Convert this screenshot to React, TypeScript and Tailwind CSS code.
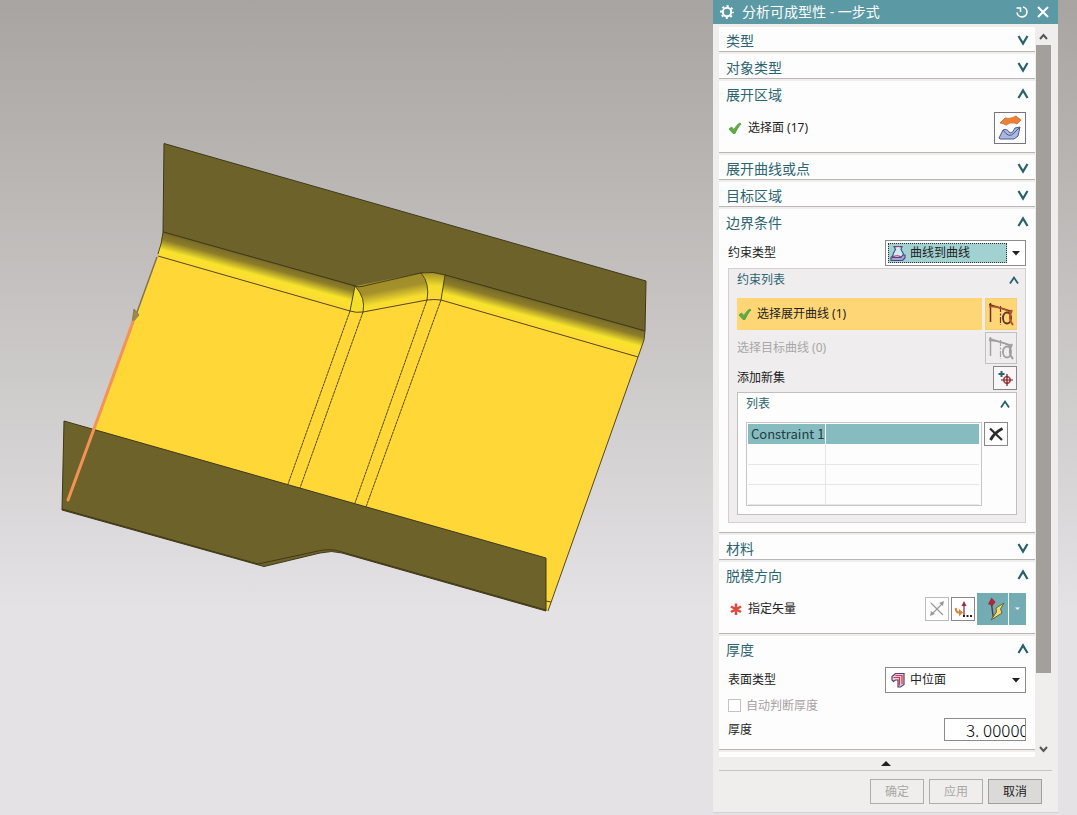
import { ReactNode, useState } from 'react'

const Chevron = ({ open }: { open: boolean }) => (
    <svg viewBox="0 0 12 16" className="w-3 h-4 shrink-0" fill="none">
        <path
            d={open ? 'M1.5 13 6 5.5 10.5 13' : 'M1.5 5 6 12.5 10.5 5'}
            stroke="#27616b"
            strokeWidth="2.2"
        />
    </svg>
)

const SmallChevron = () => (
    <svg viewBox="0 0 10 12" className="w-[10px] h-3 shrink-0" fill="none">
        <path d="M1 9.5 5 3.5 9 9.5" stroke="#27616b" strokeWidth="1.8" />
    </svg>
)

const Check = () => (
    <svg viewBox="0 0 14 14" className="w-[14px] h-[14px] shrink-0">
        <path
            d="M1 8 3.5 6 6 8.500C8 5 10 3 12 2L13 3C10.500 5.500 8.500 9 7 12.500H5Z"
            fill="#5cad45"
            stroke="#4f9a3c"
            strokeWidth="0.8"
        />
    </svg>
)

const CurveIcon = ({ disabled }: { disabled?: boolean }) => {
    const dark = disabled ? '#a5a2a2' : '#63352a'
    const red = disabled ? '#a09c9f' : '#b9502a'
    return (
        <svg viewBox="0 0 30 30" className="w-[30px] h-[30px]" fill="none">
            <path d="M4.500 4V23" stroke={dark} strokeWidth="1.500" />
            <path d="M14.500 7V26" stroke={dark} strokeWidth="1.200" strokeDasharray="6 1.500 2 1.500" />
            <path d="M3 5.500 26 12.500" stroke={dark} strokeWidth="1.400" />
            <path d="M3 7.500C11 7 19 10 26 14" stroke={red} strokeWidth="1.500" />
            <ellipse cx="21" cy="19" rx="4" ry="5.500" stroke={dark} strokeWidth="1.900" />
            <path d="M26 11C23 16 23 22 27 26" stroke={red} strokeWidth="2" />
        </svg>
    )
}

interface SectionProps {
    title: string
    open?: boolean
    children?: ReactNode
}

const Section = ({ title, open = false, children }: SectionProps) => (
    <section className="bg-[#fefdfd] border-b border-[#b9b6b5]">
        <h2>
            <button className="w-full flex items-start justify-between pt-1 pl-[7px] pr-[6px] text-sm leading-5 text-[#2c6470]">
                {title}
                <Chevron open={open} />
            </button>
        </h2>
        {open && <div className="pt-[7px] px-[9px]">{children}</div>}
    </section>
)

interface PickerProps {
    id: string
    icon: ReactNode
    value: string
    active?: boolean
}

const Picker = ({ id, icon, value, active }: PickerProps) => (
    <div className="relative w-[141px] h-[26px] border border-[#8d8a8a] bg-white p-[2px]">
        <div
            className={
                active
                    ? 'flex items-center w-[119px] h-5 pl-px border border-dotted border-[#333] bg-[#a2d1d1]'
                    : 'flex items-center w-[119px] h-5 pl-[2px]'
            }
        >
            {icon}
        </div>
        <select
            id={id}
            className="absolute inset-0 w-full h-full pl-6 appearance-none bg-transparent text-xs text-[#222] outline-none"
        >
            <option>{value}</option>
        </select>
        <svg viewBox="0 0 8 5" className="absolute right-[5px] top-[10px] w-2 h-[5px] pointer-events-none">
            <path d="M0 0H8L4 4.500Z" fill="#222" />
        </svg>
    </div>
)

// 钣金零件
const Model = () => (
    <svg viewBox="0 0 713 812" className="block w-full" fill="none" strokeLinejoin="round">
        <defs>
            <linearGradient id="bendLeft" gradientUnits="userSpaceOnUse" x1="260" y1="258" x2="253" y2="284">
                <stop offset="0.02" stopColor="#776a28" />
                <stop offset="0.28" stopColor="#8d7d29" />
                <stop offset="0.65" stopColor="#f8e42b" />
                <stop offset="1" stopColor="#ffd838" />
            </linearGradient>
            <linearGradient id="bendMid" gradientUnits="userSpaceOnUse" x1="390" y1="280" x2="395" y2="306">
                <stop offset="0" stopColor="#a08d29" />
                <stop offset="0.35" stopColor="#a5912b" />
                <stop offset="0.8" stopColor="#f7de2d" />
                <stop offset="1" stopColor="#ffd838" />
            </linearGradient>
            <linearGradient id="bendCorner" gradientUnits="userSpaceOnUse" x1="434" y1="272" x2="432" y2="300">
                <stop offset="0" stopColor="#a08d29" />
                <stop offset="0.5" stopColor="#f2dd2c" />
                <stop offset="1" stopColor="#ffd838" />
            </linearGradient>
            <linearGradient id="bendRight" gradientUnits="userSpaceOnUse" x1="550" y1="304" x2="543" y2="330">
                <stop offset="0.02" stopColor="#776a28" />
                <stop offset="0.28" stopColor="#8d7d29" />
                <stop offset="0.65" stopColor="#f8e42b" />
                <stop offset="1" stopColor="#ffd838" />
            </linearGradient>
        </defs>

        <path
            d="M163 231 158 256 94 430 546 558V610L548 611 638 357 644 340V331L445 275 427 272 355 286Z"
            fill="#ffd838"
        />
        <path
            d="M164 143.500 646 281 645 331 445 275Q433 271 421 273L368 285Q359 288 355 286L163 232Z"
            fill="#6d632a"
            stroke="#3f3818"
        />
        <path d="M163 232 355 286 350 311 158 256 160 246Z" fill="url(#bendLeft)" />
        <path d="M355 286 421 273Q430 283 427 300L363 312 350 311Z" fill="url(#bendMid)" />
        <path d="M355 286Q366 298 363 312L350 311Z" fill="#f5df2d" />
        <path d="M421 273Q433 271 445 275L441 300H427Q430 283 421 273Z" fill="url(#bendCorner)" />
        <path d="M445 275 645 331 644 340 638 357 441 300Z" fill="url(#bendRight)" />

        <g stroke="#3f3818" strokeWidth="0.9">
            <path d="M163 232 355 286 Q358 288 368 285L421 273Q433 271 445 275L645 331" />
            <path d="M158 256 350 311Q356 313 363 312L427 300Q434 299 441 300L638 357" />
            <path d="M355 286Q366 298 363 312M355 286 350 311M421 273Q430 283 427 300M445 275 441 300" />
            <path d="M163 232Q162 243 158 254M645 331 644 340 638 357 548 611" />
            <path
                d="M350 311 288 484M363 312 300 488M427 300 355 503M441 300 366 507"
                strokeDasharray="3 0.500"
            />
            <path d="M546 601 551 602" />
        </g>

        <path
            d="M64 421 546 558 546 611 342 553Q332 550 320 553L264 566.500 62 510Z"
            fill="#6d632a"
            stroke="#3f3818"
        />
        <path d="M62 509 258 564 318 551Q332 548 342 552L546 610" stroke="#3f3818" />
        <path d="M157 257 136 315" stroke="#85744a" strokeWidth="1.500" />
        <path d="M134 309 132 323 139 315Z" fill="#9b8a50" stroke="#8a7c4c" />
        <path d="M133 322 68 500" stroke="#f49355" strokeWidth="3" strokeLinecap="round" />
    </svg>
)

const App = () => {
    const [thickness, setThickness] = useState('3. 00000')

    return (
        <div className="min-h-screen flex items-start bg-linear-to-b from-[#a7a4a1] via-[#c8c5c4] via-40% to-[#e4e2e5] to-75% font-['Noto_Sans','Noto_Sans_CJK_SC',sans-serif] text-xs text-[#222]">
            <main className="flex-1 min-w-0">
                <Model />
            </main>

            <aside className="w-[345px] shrink-0 mr-[19px] bg-[#f0eeed] border-b border-[#d5d3d3]">
                <header className="h-6 flex items-center pl-[7px] pr-2 bg-[#5b99a5] text-white">
                    <svg viewBox="0 0 14 14" className="w-[14px] h-[14px]" fill="none" stroke="#fff">
                        <circle cx="7" cy="7" r="4.200" strokeWidth="2" />
                        <circle cx="7" cy="7" r="6" strokeWidth="1.800" strokeDasharray="2.200 2.512" strokeDashoffset="1.100" />
                    </svg>
                    <h1 className="flex-1 pl-2 text-sm leading-6">分析可成型性 - 一步式</h1>
                    <button aria-label="重置" className="mr-[7px]">
                        <svg viewBox="0 0 14 14" className="w-[14px] h-[14px]" fill="none" stroke="#fff" strokeWidth="1.600">
                            <path d="M8 2A5 5 0 1 1 2 7.500" />
                            <path d="M1.500 3H5.500V7" />
                        </svg>
                    </button>
                    <button aria-label="关闭">
                        <svg viewBox="0 0 14 14" className="w-[14px] h-[14px]" stroke="#fff" strokeWidth="2">
                            <path d="M2 2 12 12M12 2 2 12" />
                        </svg>
                    </button>
                </header>

                <div className="flex pt-[3px] pl-[6px] pr-[7px]">
                    <div className="flex-1 flex flex-col gap-[2px]">
                        <Section title="类型" />
                        <Section title="对象类型" />
                        <Section title="展开区域" open>
                            <div className="flex items-center pb-2">
                                <Check />
                                <span className="flex-1 pl-[6px]">选择面 (17)</span>
                                <button aria-label="选择面" className="w-8 h-8 border border-[#77757f] bg-white">
                                    <svg viewBox="0 0 30 30" className="w-[30px] h-[30px]">
                                        <path
                                            d="M5 10 10 5Q14 6 18 4.500L21 3 26 7 22 11 20 10Q15 9 11 12L9 11Z"
                                            fill="#ee8035"
                                            stroke="#c96a28"
                                            strokeWidth="0.8"
                                        />
                                        <path
                                            d="M4 25 8 17Q12 15 15 20 18 20 20 15L25 14 23 23 19 26H5Z"
                                            fill="#a9b9e4"
                                            stroke="#4c5a86"
                                        />
                                        <path d="M8 17Q14 26 19 20L25 14" fill="none" stroke="#4c5a86" />
                                    </svg>
                                </button>
                            </div>
                        </Section>
                        <Section title="展开曲线或点" />
                        <Section title="目标区域" />

                        <Section title="边界条件" open>
                            <div className="flex items-center justify-between">
                                <label htmlFor="constraintType">约束类型</label>
                                <Picker
                                    id="constraintType"
                                    active
                                    value="曲线到曲线"
                                    icon={
                                        <svg viewBox="0 0 16 16" className="w-4 h-4" strokeWidth="1.100">
                                            <path d="M1 12.500 4 10H15V13L12.500 15.500H1Z" fill="#a9a0d8" stroke="#4b4583" />
                                            <path d="M4 1.500H12L11 4.500 13.500 9 11 12.500H2.500L3.500 8 5.500 4.500Z" fill="#d3e8ef" stroke="#33528a" />
                                            <path d="M4 2.500Q8 0.500 12 2.500" fill="none" stroke="#a5405c" />
                                            <path d="M3 12Q7 9.500 11 12" fill="none" stroke="#be3552" />
                                        </svg>
                                    }
                                />
                            </div>

                            <div className="mt-[2px] mb-[9px] border border-[#d3d0d0] bg-[#efeded] px-2 pb-[7px]">
                                <h3 className="-mr-[2px]">
                                    <button className="w-full h-[29px] flex items-start justify-between pt-[3px] leading-4 text-[#2c6470]">
                                        约束列表
                                        <span className="pt-[2px]">
                                            <SmallChevron />
                                        </span>
                                    </button>
                                </h3>
                                <div className="flex flex-col gap-[2px]">
                                    <div className="flex gap-[3px]">
                                        <div className="flex-1 h-8 flex items-center pl-px bg-[#ffd676]">
                                            <Check />
                                            <span className="pl-[5px]">选择展开曲线 (1)</span>
                                        </div>
                                        <button aria-label="选择展开曲线" className="w-8 h-8 border border-[#f6cf75] bg-[#ffd676]">
                                            <CurveIcon />
                                        </button>
                                    </div>
                                    <div className="flex items-center justify-between text-[#a9a7a7]">
                                        <span>选择目标曲线 (0)</span>
                                        <button aria-label="选择目标曲线" disabled className="w-8 h-8 border border-[#c2c0c0]">
                                            <CurveIcon disabled />
                                        </button>
                                    </div>
                                    <div className="flex items-center justify-between">
                                        <span>添加新集</span>
                                        <button aria-label="添加新集" className="w-6 h-6 border border-[#88868a] bg-[#f8f6f6]">
                                            <svg viewBox="0 0 22 22" className="w-[22px] h-[22px]" fill="none">
                                                <path d="M7.500 4V10M4.500 7H10.500" stroke="#2c6472" strokeWidth="2" />
                                                <circle cx="13" cy="13" r="3.200" stroke="#cf4040" strokeWidth="1.500" />
                                                <path d="M13 7V19M7 13H19" stroke="#4d2224" strokeWidth="1.200" />
                                            </svg>
                                        </button>
                                    </div>

                                    <div className="border border-[#c2bfbf] bg-[#fdfdfd] px-2 pb-2">
                                        <h4 className="-mr-[2px]">
                                            <button className="w-full h-[29px] flex items-start justify-between pt-[3px] leading-4 text-[#2c6470]">
                                                列表
                                                <span className="pt-[2px]">
                                                    <SmallChevron />
                                                </span>
                                            </button>
                                        </h4>
                                        <div className="flex items-start gap-[2px]">
                                            <div className="flex-1 h-[84px] border border-[#c8c6c6] p-px pr-[2px]">
                                                <table className="w-full table-fixed border-collapse">
                                                    <tbody>
                                                        <tr className="h-5 bg-[#86bcbf] font-['Noto_Sans_CJK_SC',sans-serif] text-[13px] leading-4 text-[#1f3d42]">
                                                            <td className="w-[77px] pl-[3px] py-0 border-r border-white whitespace-nowrap">
                                                                Constraint 1
                                                            </td>
                                                            <td />
                                                        </tr>
                                                        {[0, 1, 2].map((row) => (
                                                            <tr key={row} className="h-5 border-b border-[#e8e5e5]">
                                                                <td className="border-r border-[#e8e5e5]" />
                                                                <td />
                                                            </tr>
                                                        ))}
                                                    </tbody>
                                                </table>
                                            </div>
                                            <button aria-label="删除" className="w-6 h-6 border border-[#88868a] bg-white">
                                                <svg viewBox="0 0 22 22" className="w-[22px] h-[22px]" stroke="#2a2a2a" fill="none">
                                                    <path d="M5 5.500 17 17" strokeWidth="2.200" />
                                                    <path d="M17.500 5.500Q9 10 5.500 17" strokeWidth="2.800" />
                                                </svg>
                                            </button>
                                        </div>
                                    </div>
                                </div>
                            </div>
                        </Section>

                        <Section title="材料" />
                        <Section title="脱模方向" open>
                            <div className="flex items-center gap-[2px] pb-2">
                                <svg viewBox="0 0 14 14" className="w-[14px] h-[14px]" stroke="#e0493b" strokeWidth="2.500">
                                    <path d="M8 1.500V13M3 4.500 13 10M13 4.500 3 10" />
                                </svg>
                                <span className="flex-1 pl-1">指定矢量</span>
                                <button aria-label="反向" disabled className="w-6 h-6 border border-[#bdbbbb]">
                                    <svg viewBox="0 0 22 22" className="w-[22px] h-[22px]" stroke="#999" fill="#999">
                                        <path d="M5 5 17 17M6 16 16 6" strokeWidth="1.200" />
                                        <path d="M18 3 17 8 13 5ZM4 18 5 13 9 16Z" stroke="none" />
                                    </svg>
                                </button>
                                <button aria-label="矢量对话框" className="w-6 h-6 border border-[#88868a] bg-white">
                                    <svg viewBox="0 0 22 22" className="w-[22px] h-[22px]" fill="none">
                                        <path d="M12 17V6" stroke="#8c3340" strokeWidth="1.300" />
                                        <path d="M12 3 14.500 8H9.500Z" fill="#9a2e44" />
                                        <path d="M4 10Q3 15 9 14.500" stroke="#e18439" strokeWidth="2.200" />
                                        <path d="M7 11 11 14.500 7 18.500Z" fill="#e18439" />
                                        <path d="M11 18H13M14.500 18H16.500M18 18H20" stroke="#222" strokeWidth="2" />
                                    </svg>
                                </button>
                                <div className="flex gap-px">
                                    <button aria-label="自动判断矢量" className="w-[31px] h-8 bg-[#73adb3]">
                                        <svg viewBox="0 0 31 32" className="w-[31px] h-8" fill="none">
                                            <path d="M14.500 11 16.500 26" stroke="#5d3a3d" strokeWidth="1.500" />
                                            <path d="M14.500 4.500 18.500 9 15.500 13 11 11Z" fill="#a8283c" />
                                            <path
                                                d="M27 10 19 15 19.500 19 14 27 25 20 23.500 16Z"
                                                fill="#f3dd6e"
                                                stroke="#5e5a2c"
                                                strokeWidth="0.9"
                                            />
                                        </svg>
                                    </button>
                                    <button aria-label="更多矢量类型" className="w-[17px] h-8 bg-[#73adb3]">
                                        <svg viewBox="0 0 17 32" className="w-[17px] h-8">
                                            <path d="M6 14.500H11L8.500 17Z" fill="#fff" />
                                        </svg>
                                    </button>
                                </div>
                            </div>
                        </Section>

                        <Section title="厚度" open>
                            <div className="flex items-center justify-between">
                                <label htmlFor="surfaceType">表面类型</label>
                                <Picker
                                    id="surfaceType"
                                    value="中位面"
                                    icon={
                                        <svg viewBox="0 0 16 16" className="w-4 h-4" strokeWidth="1.200">
                                            <path
                                                d="M2 4.500 5.500 1.500H14V12.500L10.500 15H8V8H5.500L3.500 9.500 2 8Z"
                                                fill="#ecd0da"
                                                stroke="#514078"
                                            />
                                            <path d="M3.500 5.500H9.500V13.500M5.500 3.500H12V12" fill="none" stroke="#cf3b4b" />
                                        </svg>
                                    }
                                />
                            </div>
                            <label className="flex items-center gap-[5px] h-[25px] text-[#a5a3a3]">
                                <input
                                    type="checkbox"
                                    disabled
                                    className="w-[13px] h-[13px] appearance-none border border-[#c5c3c3] bg-white"
                                />
                                自动判断厚度
                            </label>
                            <div className="flex items-center justify-between pb-2">
                                <label htmlFor="thickness">厚度</label>
                                <input
                                    id="thickness"
                                    value={thickness}
                                    onChange={(e) => setThickness(e.target.value)}
                                    className="w-[82px] h-[23px] pl-[21px] border border-[#8d8a8a] bg-white font-['Noto_Sans_CJK_SC',sans-serif] font-light text-[17px] leading-5 text-black outline-none"
                                />
                            </div>
                        </Section>
                        <div className="h-[5px] bg-[#fefdfd]" />
                    </div>

                    {/* 滚动条 */}
                    <div className="w-[16px] pl-px flex flex-col items-center">
                        <svg viewBox="0 0 15 18" className="w-[15px] h-[18px]" fill="none" stroke="#555" strokeWidth="2">
                            <path d="M4 12 7.500 8 11 12" />
                        </svg>
                        <div className="w-full flex-1">
                            <div className="h-[90%] bg-[#a39f9b]" />
                        </div>
                        <svg viewBox="0 0 15 14" className="w-[15px] h-[14px]" fill="none" stroke="#555" strokeWidth="2">
                            <path d="M4 4 7.500 8 11 4" />
                        </svg>
                    </div>
                </div>

                <button aria-label="收起" className="w-full h-[13px] flex justify-center items-center">
                    <svg viewBox="0 0 10 5" className="w-[10px] h-[5px]">
                        <path d="M5 0 10 5H0Z" fill="#222" />
                    </svg>
                </button>
                <footer className="mx-[6px] py-2 pr-[10px] flex justify-end gap-[5px] border-t border-[#c5c3c3]">
                    <button disabled className="w-[54px] h-[25px] border border-[#b0aead] text-[#a9a7a5]">
                        确定
                    </button>
                    <button disabled className="w-[54px] h-[25px] border border-[#b0aead] text-[#a9a7a5]">
                        应用
                    </button>
                    <button className="w-[54px] h-[25px] border border-[#a19f9e] bg-[#dcdad9]">取消</button>
                </footer>
            </aside>
        </div>
    )
}

export default App
